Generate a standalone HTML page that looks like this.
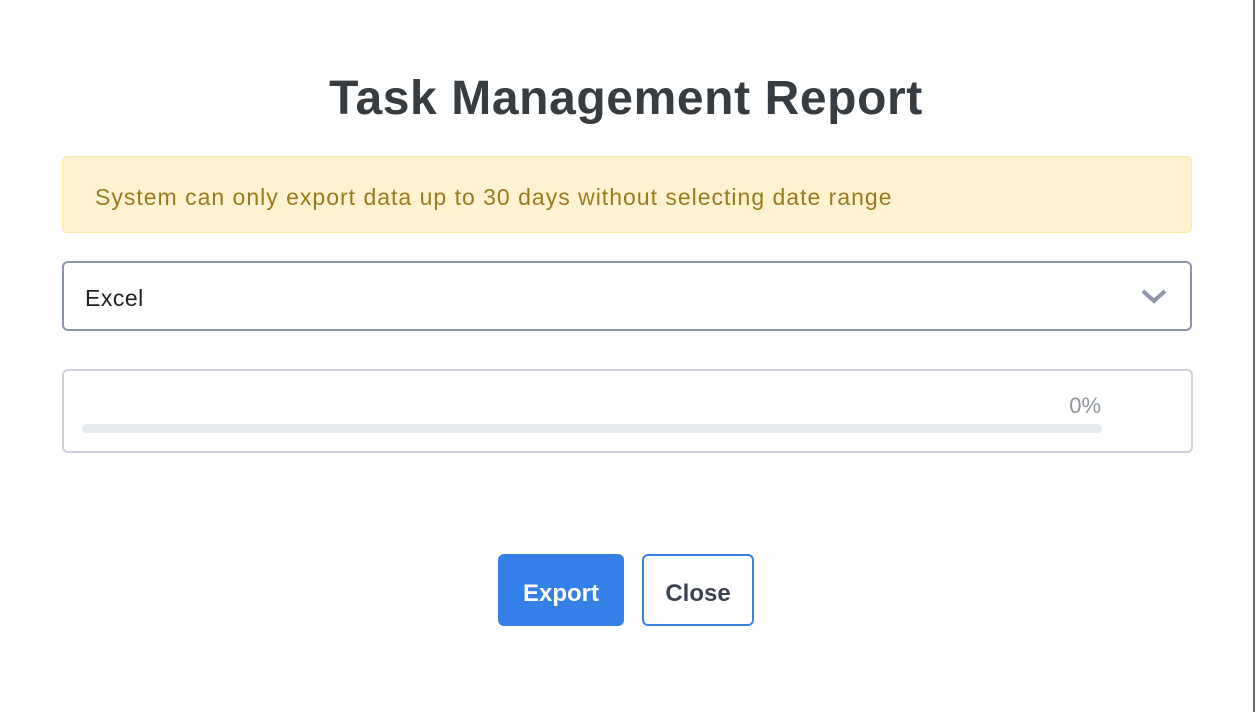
<!DOCTYPE html>
<html><head><style>
body{margin:0;width:1256px;height:712px;background:#fff;font-family:"Liberation Sans",sans-serif;position:relative;overflow:hidden}
.vl{position:absolute;left:1253px;top:0;width:2px;height:712px;background:#6b6b6b}
h1{position:absolute;left:0;width:1252px;top:70px;margin:0;text-align:center;font-size:48px;font-weight:bold;color:#363c40;line-height:58px;letter-spacing:0.6px}
.alert{position:absolute;left:62px;top:156px;width:1128px;height:75px;background:#fef3d0;border:1px solid #fde6a6;border-radius:5px;color:#9a7a1e;font-size:23px;line-height:81px;letter-spacing:1px;box-sizing:content-box}
.alert span{margin-left:32px}
.sel{position:absolute;left:62px;top:261px;width:1126px;height:66px;border:2px solid #8b97a8;border-radius:6px;font-size:23px;line-height:70px;color:#1f2328;letter-spacing:0.5px}
.sel span{margin-left:21px}
.sel svg{position:absolute;right:22px;top:24px}
.prog{position:absolute;left:62px;top:369px;width:1127px;height:80px;border:2px solid #ccd3dc;border-radius:6px}
.pct{position:absolute;right:90px;top:22px;font-size:22px;color:#8e959d}
.bar{position:absolute;left:18px;top:53px;width:1020px;height:9px;background:#e8ebee;border-radius:5px}
.btn{position:absolute;top:554px;height:72px;box-sizing:border-box;border-radius:6px;font-size:24px;font-weight:bold;text-align:center;line-height:80px}
.ex{left:498px;width:126px;background:#3580e6;color:#fff}
.cl{left:642px;width:112px;border:2px solid #3a82e4;color:#3c4452;line-height:76px;background:#fff}
</style></head><body>
<div class="vl"></div>
<h1>Task Management Report</h1>
<div class="alert"><span>System can only export data up to 30 days without selecting date range</span></div>
<div class="sel"><span>Excel</span><svg width="28" height="18" viewBox="0 0 28 18"><path d="M3 4 L14 14 L25 4" fill="none" stroke="#8b97a8" stroke-width="4"/></svg></div>
<div class="prog"><div class="pct">0%</div><div class="bar"></div></div>
<div class="btn ex">Export</div>
<div class="btn cl">Close</div>
</body></html>
